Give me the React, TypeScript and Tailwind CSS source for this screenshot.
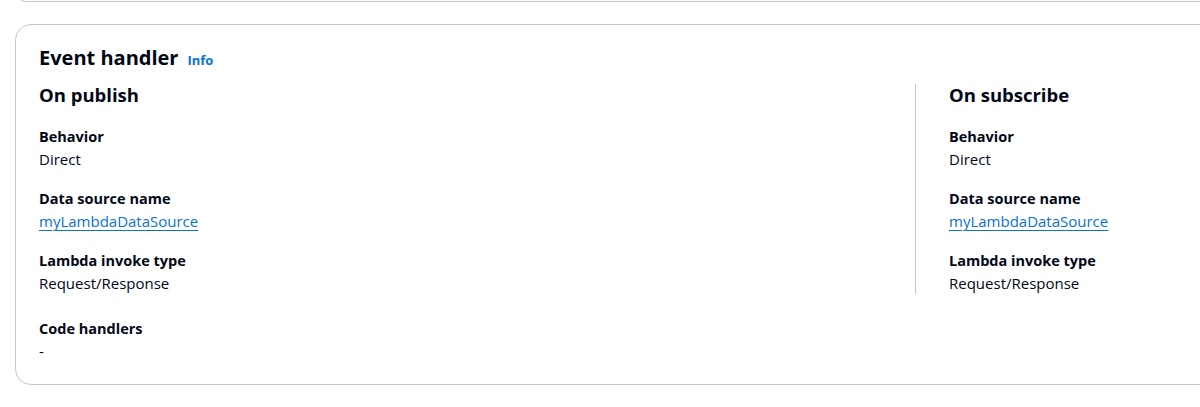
import React from "react";

const font = { fontFamily: "'Open Sans', 'Noto Sans', sans-serif" };

function Field({ label, value, link }: { label: string; value: string; link?: boolean }) {
  return (
    <div>
      <div className="text-[14.5px] leading-[22px] font-bold text-[#000716]">{label}</div>
      {link ? (
        <a href="#" className="block w-fit text-[15px] leading-[22px] text-[#0972d3] underline underline-offset-[3px] decoration-[1px]">
          {value}
        </a>
      ) : (
        <div className="text-[15px] leading-[22px] text-[#000716]">{value}</div>
      )}
    </div>
  );
}

function Column({ title }: { title: string }) {
  return (
    <div className="flex flex-col">
      <h3 className="text-[18.5px] leading-[22px] font-bold text-[#000716]">{title}</h3>
      <div className="mt-[20px] flex flex-col gap-[18px]">
        <Field label="Behavior" value="Direct" />
        <Field label="Data source name" value="myLambdaDataSource" link />
        <Field label="Lambda invoke type" value="Request/Response" />
      </div>
    </div>
  );
}

export default function App() {
  return (
    <div className="w-[1200px] h-[407px] overflow-hidden bg-white" style={font}>
      {/* bottom edge of the previous container */}
      <div className="ml-[15px] -mt-[20px] h-[22px] w-[1800px] rounded-2xl border border-[#c6c6cd]" />

      <div className="ml-[15px] mt-[22px] w-[1800px] rounded-2xl border border-[#c6c6cd] px-[23px] pt-[19px] pb-[22px]">
        <div className="flex items-baseline gap-[9px]">
          <h2 className="text-[20px] leading-[28px] font-bold text-[#000716]">Event handler</h2>
          <a href="#" className="text-[13px] font-bold text-[#0972d3]">Info</a>
        </div>

        <div className="mt-[12px] flex">
          <div className="w-[876px]">
            <Column title="On publish" />
          </div>
          <div className="border-l border-[#c6c6cd] pl-[33px]">
            <Column title="On subscribe" />
          </div>
        </div>

        <div className="mt-[24px]">
          <Field label="Code handlers" value="-" />
        </div>
      </div>
    </div>
  );
}
